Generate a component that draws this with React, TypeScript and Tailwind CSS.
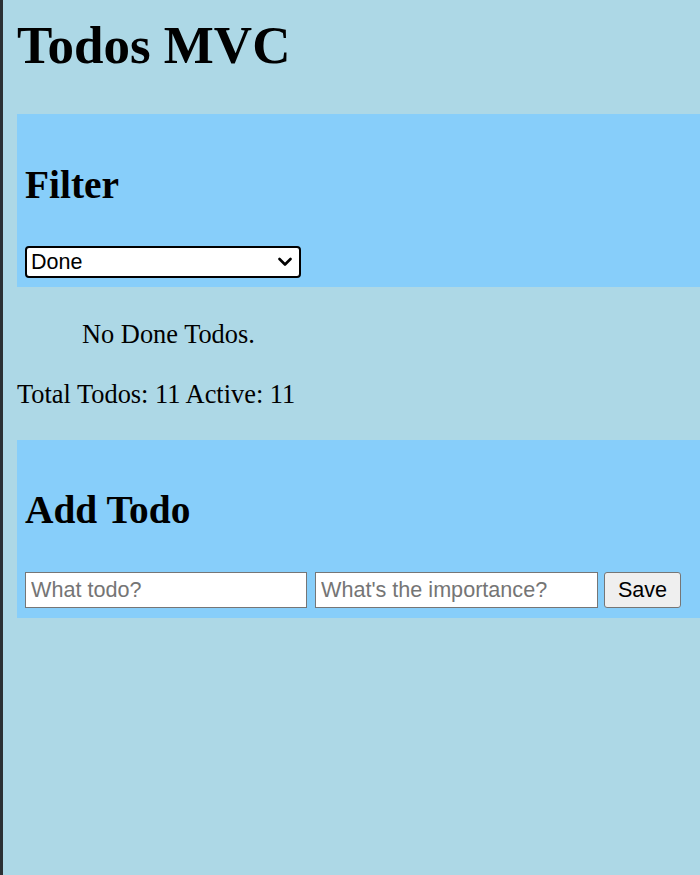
import { useState } from "react";

export default function App() {
    const [filter, setFilter] = useState("Done")
    const [title, setTitle] = useState("")
    const [importance, setImportance] = useState("")

    return (
        <div className="min-h-[875px] w-full bg-[#add8e6] border-l-[3px] border-[#2b3034] pl-[14px] text-black" style={{ fontFamily: '"Liberation Serif", serif' }}>
            <h1 className="pt-[19px] text-[53px] leading-[53px] font-bold">Todos MVC</h1>

            <section className="mt-[42px] bg-[#87cefa] pl-[8px] pt-[52px] pb-[9px]">
                <h2 className="text-[39.4px] leading-[39px] font-bold">Filter</h2>
                <div className="relative mt-[41px] w-[276px] h-[32px]">
                    <select
                        value={filter}
                        onChange={(e) => setFilter(e.target.value)}
                        className="appearance-none w-full h-full bg-white border-[2.5px] border-black rounded-[4px] pl-[4px] text-[21.5px] leading-[26px] outline-none"
                        style={{ fontFamily: '"Liberation Sans", Arial, sans-serif' }}
                    >
                        <option>All</option>
                        <option>Active</option>
                        <option>Done</option>
                    </select>
                    <svg className="absolute right-[9px] top-[11px] pointer-events-none" width="14" height="10" viewBox="0 0 14 10">
                        <path d="M1.5 2 L7 7.5 L12.5 2" fill="none" stroke="black" strokeWidth="2.6" strokeLinecap="round" strokeLinejoin="round" />
                    </svg>
                </div>
            </section>

            <ul className="pl-[65px] mt-[34px]">
                <p className="text-[26.4px] leading-[26px]">No Done Todos.</p>
            </ul>
            <p className="mt-[34px] text-[26.4px] leading-[26px]">Total Todos: 11 Active: 11</p>

            <section className="mt-[33px] bg-[#87cefa] pl-[8px] pt-[51px] pb-[10px]">
                <h2 className="text-[39.4px] leading-[39px] font-bold">Add Todo</h2>
                <form className="mt-[42px] flex items-center gap-[8px]" style={{ fontFamily: '"Liberation Sans", Arial, sans-serif' }} onSubmit={(e) => e.preventDefault()}>
                    <input
                        className="w-[282px] h-[36px] bg-white border border-[#767676] px-[5px] text-[21.6px] placeholder:text-[#757575] outline-none"
                        type="text"
                        value={title}
                        onChange={(e) => setTitle(e.target.value)}
                        placeholder="What todo?"
                    />
                    <input
                        className="w-[283px] h-[36px] bg-white border border-[#767676] px-[5px] text-[21.6px] placeholder:text-[#757575] outline-none"
                        type="text"
                        value={importance}
                        onChange={(e) => setImportance(e.target.value)}
                        placeholder="What's the importance?"
                    />
                    <button type="submit" className="-ml-[2px] w-[77px] h-[36px] bg-[#efefef] border border-[#767676] rounded-[3px] text-[21.6px]">Save</button>
                </form>
            </section>
        </div>
    )
}
